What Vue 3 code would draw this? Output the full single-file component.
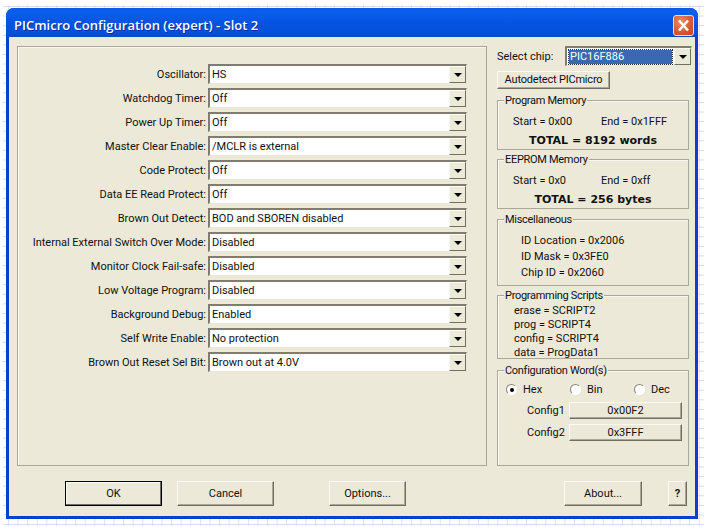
<template>
  <div class="desktop">
    <div class="grid">
      <div class="window">
        <div class="titlebar">
          <span class="title">PICmicro Configuration (expert) - Slot 2</span>
          <div class="close">
            <svg width="19" height="19" viewBox="0 0 19 19">
              <path d="M5 4.5 L14 14.5 M14 4.5 L5 14.5" stroke="#fff" stroke-width="2.6" fill="none" />
            </svg>
          </div>
        </div>
        <div class="body">
          <div class="main">
            <div class="options">
              <div v-for="row in rows" :key="row.label" class="row">
                <span class="row-label">{{ row.label }}:</span>
                <div class="select">
                  <span class="select-text">{{ row.value }}</span>
                  <span class="arrow"><i></i></span>
                </div>
              </div>
            </div>
            <div class="side">
              <div class="chip-row">
                <span class="chip-label">Select chip:</span>
                <div class="select chip-select">
                  <span class="chip-text"><b>PIC16F886</b></span>
                  <span class="arrow"><i></i></span>
                </div>
              </div>
              <button class="btn autodetect">Autodetect PICmicro</button>

              <div class="group mem">
                <span class="legend">Program Memory</span>
                <div class="pair"><span>Start = 0x00</span><span>End = 0x1FFF</span></div>
                <div class="total">TOTAL = 8192 words</div>
              </div>
              <div class="group mem eeprom">
                <span class="legend">EEPROM Memory</span>
                <div class="pair"><span>Start = 0x0</span><span>End = 0xff</span></div>
                <div class="total">TOTAL = 256 bytes</div>
              </div>
              <div class="group misc">
                <span class="legend">Miscellaneous</span>
                <div>ID Location = 0x2006</div>
                <div>ID Mask = 0x3FE0</div>
                <div>Chip ID = 0x2060</div>
              </div>
              <div class="group scripts">
                <span class="legend">Programming Scripts</span>
                <div>erase = SCRIPT2</div>
                <div>prog = SCRIPT4</div>
                <div>config = SCRIPT4</div>
                <div>data = ProgData1</div>
              </div>
              <div class="group config">
                <span class="legend">Configuration Word(s)</span>
                <div class="radios">
                  <span v-for="r in radios" :key="r" class="radio-item">
                    <span class="radio" :class="{ on: r === 'Hex' }"></span>{{ r }}
                  </span>
                </div>
                <div class="config-row">
                  <span class="config-label">Config1</span>
                  <button class="btn config-btn">0x00F2</button>
                </div>
                <div class="config-row">
                  <span class="config-label">Config2</span>
                  <button class="btn config-btn">0x3FFF</button>
                </div>
              </div>
            </div>
          </div>
          <div class="footer">
            <button class="btn ok">OK</button>
            <button class="btn cancel">Cancel</button>
            <button class="btn options-btn">Options...</button>
            <button class="btn about">About...</button>
            <button class="btn help">?</button>
          </div>
        </div>
      </div>
    </div>
  </div>
</template>

<script setup>
const rows = [
  { label: 'Oscillator', value: 'HS' },
  { label: 'Watchdog Timer', value: 'Off' },
  { label: 'Power Up Timer', value: 'Off' },
  { label: 'Master Clear Enable', value: '/MCLR is external' },
  { label: 'Code Protect', value: 'Off' },
  { label: 'Data EE Read Protect', value: 'Off' },
  { label: 'Brown Out Detect', value: 'BOD and SBOREN disabled' },
  { label: 'Internal External Switch Over Mode', value: 'Disabled' },
  { label: 'Monitor Clock Fail-safe', value: 'Disabled' },
  { label: 'Low Voltage Program', value: 'Disabled' },
  { label: 'Background Debug', value: 'Enabled' },
  { label: 'Self Write Enable', value: 'No protection' },
  { label: 'Brown Out Reset Sel Bit', value: 'Brown out at 4.0V' }
]

const radios = ['Hex', 'Bin', 'Dec']
</script>

<style>
html, body {
  margin: 0;
  background: #fff;
}
</style>

<style scoped>
.desktop {
  width: 709px;
  height: 531px;
  box-sizing: border-box;
  padding: 5px 5px 5px 3px;
  overflow: hidden;
  background: #fff;
  font-family: "Roboto", "Liberation Sans", sans-serif;
  font-size: 11px;
  color: #111;
}

.grid {
  height: 100%;
  box-sizing: border-box;
  padding: 3px 6px 7px 3px;
  background-image:
    linear-gradient(#cfdcf3 1px, transparent 1px),
    linear-gradient(90deg, #d8e2f5 1px, transparent 1px);
  background-size: 100% 9.6px, 9.6px 100%;
  background-position: 0 1px, 5px 0;
}

.window {
  height: 100%;
  display: flex;
  flex-direction: column;
  border-radius: 8px 8px 0 0;
  background: #0a3fd0;
  overflow: hidden;
}

.titlebar {
  flex: 0 0 29px;
  display: flex;
  align-items: center;
  justify-content: space-between;
  padding: 0 4px 0 8px;
  background: linear-gradient(#0a5ae6 0, #0a5fee 12%, #0553e0 55%, #0350da 85%, #0a48c8 100%);
}

.title {
  color: #fff;
  font-family: "Open Sans", sans-serif;
  font-weight: 600;
  font-size: 13px;
  padding-top: 4px;
  text-shadow: 1px 1px 0 #0a2f9a;
}

.close {
  width: 21px;
  height: 21px;
  margin-top: 5px;
  border-radius: 3px;
  border: 1px solid #f4dcd2;
  box-sizing: border-box;
  background: radial-gradient(circle at 35% 30%, #ea8e6c, #d9562f 60%, #c4431f);
  display: flex;
  align-items: center;
  justify-content: center;
}

.close svg {
  flex: none;
}

.body {
  flex: 1;
  margin: 0 3px 3px 3px;
  background: #ece9d8;
  display: flex;
  flex-direction: column;
  padding: 9px 6px 0 8px;
  min-height: 0;
}

.main {
  display: flex;
  gap: 10px;
  height: 420px;
}

.options {
  width: 470px;
  box-sizing: border-box;
  border: 1px solid #aca899;
  padding: 17px 19px 0 0;
  box-shadow: inset 1px 1px 0 #f8f7f0;
  display: flex;
  flex-direction: column;
  gap: 4px;
}

.row {
  display: flex;
  align-items: center;
  height: 20px;
  gap: 2px;
}

.row-label {
  width: 188px;
  text-align: right;
  white-space: nowrap;
}

.select {
  flex: 1;
  height: 20px;
  box-sizing: border-box;
  display: flex;
  align-items: center;
  background: #fff;
  border-top: 2px solid #7f7c70;
  border-left: 2px solid #7f7c70;
  border-right: 1px solid #ece9d8;
  border-bottom: 1px solid #ece9d8;
  padding-left: 2px;
}

.select-text {
  flex: 1;
  white-space: nowrap;
}

.arrow {
  width: 17px;
  height: 17px;
  box-sizing: border-box;
  background: #ece9d8;
  border: 1px solid;
  border-color: #fbfaf4 #716f64 #716f64 #fbfaf4;
  display: flex;
  align-items: center;
  justify-content: center;
}

.arrow i {
  width: 0;
  height: 0;
  border-left: 4px solid transparent;
  border-right: 4px solid transparent;
  border-top: 4px solid #000;
}

.side {
  flex: 1;
  min-width: 0;
  display: flex;
  flex-direction: column;
}

.chip-row {
  display: flex;
  align-items: center;
  height: 20px;
  margin-right: -3px;
}

.chip-label {
  width: 68px;
  white-space: nowrap;
}

.chip-text {
  flex: 1;
  display: flex;
  align-items: center;
  height: 14px;
  margin-right: 2px;
}

.chip-text b {
  flex: 1;
  font-weight: 400;
  background: #3a69b4;
  color: #fff;
  outline: 1px dotted #1b2c4f;
  padding: 0 1px;
  line-height: 14px;
}

.btn {
  display: block;
  box-sizing: border-box;
  padding: 0;
  background: #ece9d8;
  font: inherit;
  color: #111;
  border: 1px solid;
  border-color: #fbfaf4 #716f64 #716f64 #fbfaf4;
  box-shadow: inset -1px -1px 0 #aca899;
}

.autodetect {
  width: 113px;
  height: 18px;
  margin-top: 5px;
  line-height: 14px;
  letter-spacing: -0.2px;
}

.group {
  position: relative;
  box-sizing: border-box;
  border: 1px solid #aca899;
  box-shadow: inset 1px 1px 0 #f8f7f0;
}

.legend {
  position: absolute;
  top: -8px;
  left: 6px;
  padding: 0 1px;
  line-height: 15px;
  letter-spacing: -0.3px;
  background: #ece9d8;
  white-space: nowrap;
}

.mem {
  height: 50px;
  margin-top: 11px;
  padding: 13px 0 0 15px;
}

.eeprom {
  margin-top: 9px;
}

.pair {
  display: flex;
  line-height: 15px;
}

.pair span:first-child {
  width: 88px;
}

.total {
  margin: 4px 0 0 -15px;
  text-align: center;
  font-family: "DejaVu Sans", sans-serif;
  font-weight: 700;
  font-size: 11px;
  line-height: 15px;
}

.misc {
  height: 67px;
  margin-top: 10px;
  padding: 13px 0 0 23px;
  line-height: 16px;
}

.scripts {
  height: 64px;
  margin-top: 9px;
  padding: 8px 0 0 16px;
  line-height: 14px;
}

.config {
  flex: 1;
  margin-top: 11px;
  padding: 10px 0 0 8px;
}

.radios {
  display: flex;
  height: 16px;
  align-items: center;
}

.radio-item {
  flex: none;
  width: 64px;
  display: flex;
  align-items: center;
  gap: 6px;
}

.radio {
  width: 11px;
  height: 11px;
  box-sizing: border-box;
  border-radius: 50%;
  border: 1px solid;
  border-color: #8a8880 #fff #fff #8a8880;
  background: #fff;
  position: relative;
}

.radio.on::after {
  content: '';
  position: absolute;
  left: 3px;
  top: 3px;
  width: 4px;
  height: 4px;
  border-radius: 50%;
  background: #000;
}

.config-row {
  display: flex;
  align-items: center;
  height: 18px;
  margin-top: 4px;
}

.config-label {
  width: 42px;
  margin-left: 21px;
}

.config-btn {
  width: 113px;
  height: 17px;
  line-height: 13px;
}

.footer {
  display: flex;
  align-items: flex-start;
  padding: 15px 0 0 48px;
}

.footer .btn {
  height: 25px;
}

.ok {
  width: 97px;
  border: 1px solid #000;
  box-shadow: inset -1px -1px 0 #716f64, inset 1px 1px 0 #fbfaf4;
}

.cancel {
  width: 97px;
  margin-left: 15px;
}

.options-btn {
  width: 77px;
  margin-left: 55px;
}

.about {
  width: 78px;
  margin-left: 158px;
}

.help {
  width: 19px;
  margin-left: 26px;
  font-weight: 700;
}
</style>
